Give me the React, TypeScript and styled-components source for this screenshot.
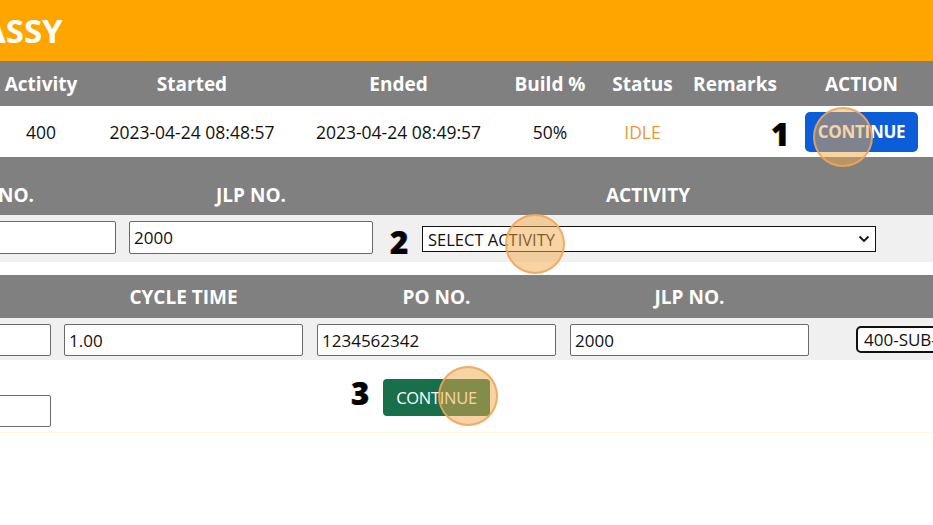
import React from "react";
import styled, { createGlobalStyle } from "styled-components";

const Global = createGlobalStyle`
  html, body { margin: 0; padding: 0; background: #ffffff; }
  body { font-family: "Open Sans", "Noto Sans", Arial, sans-serif; color: #111; }
  * { box-sizing: border-box; }
`;

const Screen = styled.div`
  position: relative;
  width: 933px;
  height: 525px;
  overflow: hidden;
  background: #ffffff;
`;

const TitleBar = styled.header`
  height: 61px;
  background: #ffa500;
  display: flex;
  align-items: center;
  overflow: hidden;
`;

const Title = styled.h1`
  margin: 0 0 0 -17px;
  font-size: 33px;
  font-weight: 700;
  line-height: 1;
  color: #ffffff;
  white-space: nowrap;
`;

const SummaryTable = styled.div`
  display: grid;
  grid-template-columns: 82px 220px 193px 110px 75px 110px 143px;
`;

const HeadCell = styled.div`
  height: 45px;
  background: #808080;
  color: #ffffff;
  font-size: 19px;
  font-weight: 700;
  display: flex;
  align-items: center;
  justify-content: center;
  white-space: nowrap;
`;

const DataCell = styled.div<{ $tone?: string }>`
  height: 51px;
  background: #ffffff;
  color: ${(p) => p.$tone ?? "#111"};
  font-size: 17.5px;
  display: flex;
  align-items: center;
  justify-content: center;
  white-space: nowrap;
`;

const PrimaryButton = styled.button`
  width: 113px;
  height: 40px;
  border: none;
  border-radius: 5px;
  background: #0b5ed7;
  color: #ffffff;
  font-family: inherit;
  font-size: 17px;
  font-weight: 700;
  letter-spacing: -0.3px;
  padding: 0;
`;

const FormGrid = styled.div<{ $cols: string; $shift: number; $gap?: number }>`
  display: grid;
  grid-template-columns: ${(p) => p.$cols};
  margin-left: ${(p) => -p.$shift}px;
  margin-top: ${(p) => p.$gap ?? 0}px;
`;

const FormHead = styled.div<{ $h: number; $pb: number }>`
  height: ${(p) => p.$h}px;
  padding-bottom: ${(p) => p.$pb}px;
  background: #808080;
  color: #ffffff;
  font-size: 19px;
  font-weight: 700;
  line-height: 24px;
  display: flex;
  align-items: flex-end;
  justify-content: center;
  white-space: nowrap;
`;

const FormCell = styled.div<{ $h: number; $pt: number; $pr?: number; $bg?: string }>`
  height: ${(p) => p.$h}px;
  padding: ${(p) => p.$pt}px ${(p) => p.$pr ?? 7}px 0 7px;
  background: ${(p) => p.$bg ?? "#f0f0f0"};
  display: flex;
  align-items: flex-start;
  overflow: hidden;
`;

const TextInput = styled.input<{ $h: number }>`
  width: 100%;
  height: ${(p) => p.$h}px;
  border: 1px solid #6a6a6a;
  border-radius: 2px;
  background: #ffffff;
  font-family: inherit;
  font-size: 17px;
  color: #111;
  padding: 0 4px;
  outline: none;
`;

const SelectWrap = styled.div`
  position: relative;
  margin: 5px 0 0 35px;
  width: 454px;
`;

const Select = styled.select`
  appearance: none;
  -webkit-appearance: none;
  width: 100%;
  height: 26px;
  border: 1px solid #111;
  border-radius: 0;
  background: #ffffff;
  font-family: inherit;
  font-size: 16.5px;
  color: #111;
  padding: 0 24px 0 5px;
  outline: none;
`;

const Chevron = styled.svg`
  position: absolute;
  right: 6px;
  top: 9px;
  width: 12px;
  height: 8px;
  pointer-events: none;
`;

const CodeBox = styled.div`
  margin: 2px 0 0 33px;
  height: 27px;
  width: 240px;
  border: 2px solid #111;
  border-radius: 5px;
  background: #ffffff;
  font-size: 17px;
  line-height: 23px;
  padding: 0 6px;
  white-space: nowrap;
  overflow: hidden;
`;

const ButtonCell = styled.div`
  height: 72px;
  padding-top: 19px;
  display: flex;
  justify-content: center;
  align-items: flex-start;
  background: #ffffff;
`;

const SuccessButton = styled.button`
  width: 107px;
  height: 37px;
  border: none;
  border-radius: 4px;
  background: #17704a;
  color: #ffffff;
  font-family: inherit;
  font-size: 16.5px;
  font-weight: 400;
  letter-spacing: -0.3px;
  padding: 0;
`;

const FaintRule = styled.div`
  height: 1px;
  background: #fbf6dc;
`;

const StepNumber = styled.span<{ $x: number; $y: number }>`
  position: absolute;
  left: ${(p) => p.$x}px;
  top: ${(p) => p.$y}px;
  font-size: 31px;
  font-weight: 800;
  line-height: 32px;
  color: #000000;
  text-shadow: -0.6px 0 0 rgba(240, 150, 50, 0.8), 0.6px 0 0 rgba(30, 60, 210, 0.8);
`;

const Spot = styled.div<{ $x: number; $y: number }>`
  position: absolute;
  left: ${(p) => p.$x - 30}px;
  top: ${(p) => p.$y - 30}px;
  width: 60px;
  height: 60px;
  border-radius: 50%;
  background: rgba(242, 168, 72, 0.5);
  border: 2px solid rgba(238, 165, 90, 0.85);
  pointer-events: none;
`;

const summaryHeads = ["Activity", "Started", "Ended", "Build %", "Status", "Remarks", "ACTION"];

export default function App() {
  return (
    <Screen>
      <Global />
      <TitleBar>
        <Title>ASSY</Title>
      </TitleBar>

      <SummaryTable>
        {summaryHeads.map((h) => (
          <HeadCell key={h}>{h}</HeadCell>
        ))}
        <DataCell>400</DataCell>
        <DataCell>2023-04-24 08:48:57</DataCell>
        <DataCell>2023-04-24 08:49:57</DataCell>
        <DataCell>50%</DataCell>
        <DataCell $tone="#e8983c">IDLE</DataCell>
        <DataCell />
        <DataCell>
          <PrimaryButton>CONTINUE</PrimaryButton>
        </DataCell>
      </SummaryTable>

      <FormGrid $cols="244px 258px 536px 1fr" $shift={122}>
        <FormHead $h={58} $pb={8}>PO NO.</FormHead>
        <FormHead $h={58} $pb={8}>JLP NO.</FormHead>
        <FormHead $h={58} $pb={8}>ACTIVITY</FormHead>
        <FormHead $h={58} $pb={8} />
        <FormCell $h={47} $pt={6} $pr={6}>
          <TextInput $h={33} defaultValue="1234562342" />
        </FormCell>
        <FormCell $h={47} $pt={6}>
          <TextInput $h={33} defaultValue="2000" />
        </FormCell>
        <FormCell $h={47} $pt={6}>
          <SelectWrap>
            <Select defaultValue="">
              <option value="">SELECT ACTIVITY</option>
            </Select>
            <Chevron viewBox="0 0 12 8">
              <path d="M1.5 1.5 L6 6 L10.5 1.5" fill="none" stroke="#111" strokeWidth="1.8" />
            </Chevron>
          </SelectWrap>
        </FormCell>
        <FormCell $h={47} $pt={6} />
      </FormGrid>

      <FormGrid $cols="253px 253px 253px 253px 253px" $shift={196} $gap={13}>
        <FormHead $h={43} $pb={9}>QTY</FormHead>
        <FormHead $h={43} $pb={9}>CYCLE TIME</FormHead>
        <FormHead $h={43} $pb={9}>PO NO.</FormHead>
        <FormHead $h={43} $pb={9}>JLP NO.</FormHead>
        <FormHead $h={43} $pb={9} />
        <FormCell $h={42} $pt={6} $pr={6}>
          <TextInput $h={32} defaultValue="1" />
        </FormCell>
        <FormCell $h={42} $pt={6}>
          <TextInput $h={32} defaultValue="1.00" />
        </FormCell>
        <FormCell $h={42} $pt={6}>
          <TextInput $h={32} defaultValue="1234562342" />
        </FormCell>
        <FormCell $h={42} $pt={6}>
          <TextInput $h={32} defaultValue="2000" />
        </FormCell>
        <FormCell $h={42} $pt={6}>
          <CodeBox>400-SUB-ASSY-001</CodeBox>
        </FormCell>

        <FormCell $h={72} $pt={35} $pr={6} $bg="#ffffff">
          <TextInput $h={32} defaultValue="" />
        </FormCell>
        <ButtonCell />
        <ButtonCell>
          <SuccessButton>CONTINUE</SuccessButton>
        </ButtonCell>
        <ButtonCell />
        <ButtonCell />
      </FormGrid>
      <FaintRule />

      <StepNumber $x={771} $y={118}>1</StepNumber>
      <StepNumber $x={390} $y={226}>2</StepNumber>
      <StepNumber $x={351} $y={377}>3</StepNumber>

      <Spot $x={843} $y={137} />
      <Spot $x={535} $y={244} />
      <Spot $x={468} $y={396} />
    </Screen>
  );
}
